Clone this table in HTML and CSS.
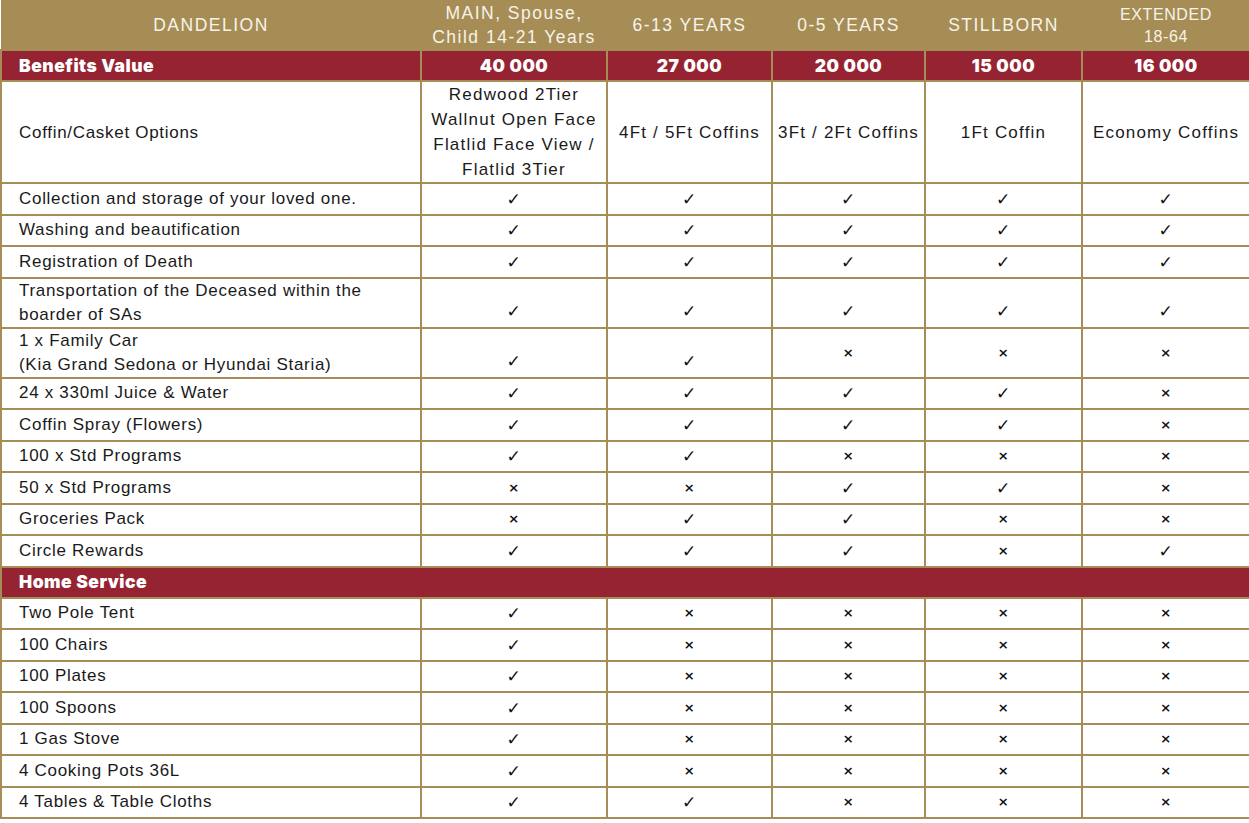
FILE: index.html
```html
<!DOCTYPE html>
<html>
<head>
<meta charset="utf-8">
<link rel="stylesheet" href="styles.css">
</head>
<body>
<table class="plan">
  <colgroup>
    <col class="c0"><col class="c1"><col class="c2"><col class="c3"><col class="c4"><col class="c5">
  </colgroup>
  <thead>
    <tr class="head">
      <th>DANDELION</th>
      <th>MAIN, Spouse,<br>Child 14-21 Years</th>
      <th>6-13 YEARS</th>
      <th>0-5 YEARS</th>
      <th>STILLBORN</th>
      <th class="ext">EXTENDED<br>18-64</th>
    </tr>
  </thead>
  <tbody>
    <tr class="band">
      <td class="lbl">Benefits Value</td>
      <td>40 000</td><td>27 000</td><td>20 000</td><td>15 000</td><td>16 000</td>
    </tr>
    <tr class="coffin">
      <td class="lbl">Coffin/Casket Options</td>
      <td class="val">Redwood 2Tier<br>Wallnut Open Face<br>Flatlid Face View /<br>Flatlid 3Tier</td>
      <td class="val">4Ft / 5Ft Coffins</td>
      <td class="val">3Ft / 2Ft Coffins</td>
      <td class="val">1Ft Coffin</td>
      <td class="val">Economy Coffins</td>
    </tr>
    <tr><td class="lbl">Collection and storage of your loved one.</td><td class="y">✓</td><td class="y">✓</td><td class="y">✓</td><td class="y">✓</td><td class="y">✓</td></tr>
    <tr><td class="lbl">Washing and beautification</td><td class="y">✓</td><td class="y">✓</td><td class="y">✓</td><td class="y">✓</td><td class="y">✓</td></tr>
    <tr><td class="lbl">Registration of Death</td><td class="y">✓</td><td class="y">✓</td><td class="y">✓</td><td class="y">✓</td><td class="y">✓</td></tr>
    <tr class="two"><td class="lbl">Transportation of the Deceased within the<br>boarder of SAs</td><td class="y low">✓</td><td class="y low">✓</td><td class="y low">✓</td><td class="y low">✓</td><td class="y low">✓</td></tr>
    <tr class="two"><td class="lbl">1 x Family Car<br>(Kia Grand Sedona or Hyundai Staria)</td><td class="y low">✓</td><td class="y low">✓</td><td class="n">×</td><td class="n">×</td><td class="n">×</td></tr>
    <tr><td class="lbl">24 x 330ml Juice &amp; Water</td><td class="y">✓</td><td class="y">✓</td><td class="y">✓</td><td class="y">✓</td><td class="n">×</td></tr>
    <tr><td class="lbl">Coffin Spray (Flowers)</td><td class="y">✓</td><td class="y">✓</td><td class="y">✓</td><td class="y">✓</td><td class="n">×</td></tr>
    <tr><td class="lbl">100 x Std Programs</td><td class="y">✓</td><td class="y">✓</td><td class="n">×</td><td class="n">×</td><td class="n">×</td></tr>
    <tr><td class="lbl">50 x Std Programs</td><td class="n">×</td><td class="n">×</td><td class="y">✓</td><td class="y">✓</td><td class="n">×</td></tr>
    <tr><td class="lbl">Groceries Pack</td><td class="n">×</td><td class="y">✓</td><td class="y">✓</td><td class="n">×</td><td class="n">×</td></tr>
    <tr><td class="lbl">Circle Rewards</td><td class="y">✓</td><td class="y">✓</td><td class="y">✓</td><td class="n">×</td><td class="y">✓</td></tr>
    <tr class="band section"><td class="lbl" colspan="6">Home Service</td></tr>
    <tr><td class="lbl">Two Pole Tent</td><td class="y">✓</td><td class="n">×</td><td class="n">×</td><td class="n">×</td><td class="n">×</td></tr>
    <tr><td class="lbl">100 Chairs</td><td class="y">✓</td><td class="n">×</td><td class="n">×</td><td class="n">×</td><td class="n">×</td></tr>
    <tr><td class="lbl">100 Plates</td><td class="y">✓</td><td class="n">×</td><td class="n">×</td><td class="n">×</td><td class="n">×</td></tr>
    <tr><td class="lbl">100 Spoons</td><td class="y">✓</td><td class="n">×</td><td class="n">×</td><td class="n">×</td><td class="n">×</td></tr>
    <tr><td class="lbl">1 Gas Stove</td><td class="y">✓</td><td class="n">×</td><td class="n">×</td><td class="n">×</td><td class="n">×</td></tr>
    <tr><td class="lbl">4 Cooking Pots 36L</td><td class="y">✓</td><td class="n">×</td><td class="n">×</td><td class="n">×</td><td class="n">×</td></tr>
    <tr><td class="lbl">4 Tables &amp; Table Cloths</td><td class="y">✓</td><td class="y">✓</td><td class="n">×</td><td class="n">×</td><td class="n">×</td></tr>
  </tbody>
</table>
</body>
</html>
```
FILE: styles.css
```css
html, body {
  margin: 0;
  padding: 0;
  background: #ffffff;
}

.plan {
  width: 1249px;
  table-layout: fixed;
  border-collapse: collapse;
  font-family: "Liberation Sans", Arial, sans-serif;
  font-size: 17px;
  color: #1a1a1a;
}

.c0 { width: 420px; }
.c1 { width: 186px; }
.c2 { width: 165px; }
.c3 { width: 153px; }
.c4 { width: 157px; }
.c5 { width: 168px; }

.plan td {
  border: 2px solid #a68d57;
  padding: 0;
  height: 29.5px;
  text-align: center;
  vertical-align: middle;
  letter-spacing: 0.7px;
  line-height: 20px;
}

.head th {
  background: #a68d55;
  color: #f7f3ea;
  font-weight: normal;
  font-size: 17.5px;
  letter-spacing: 1.5px;
  line-height: 24px;
  height: 49px;
  padding: 0;
  text-align: center;
  vertical-align: middle;
  border: none;
}

.head th.ext {
  font-size: 16px;
  letter-spacing: 0.6px;
  line-height: 22px;
  padding-top: 2px;
  height: 47px;
}

.band td {
  background: #962332;
  color: #ffffff;
  font-family: "Inter", "Liberation Sans", sans-serif;
  font-weight: 900;
  font-size: 17.5px;
  letter-spacing: 0.5px;
  height: 29px;
}

.plan td.lbl {
  text-align: left;
  padding-left: 17px;
}

.coffin td {
  height: 99px;
  line-height: 25px;
}

.coffin td.val {
  letter-spacing: 1.2px;
}

.two td {
  height: 48px;
  line-height: 24px;
}

.plan td.y {
  font-family: "DejaVu Sans", sans-serif;
  font-size: 17px;
  color: #111;
}

.plan td.low {
  vertical-align: bottom;
  line-height: 20px;
  height: 42px;
  padding-bottom: 6px;
}

.plan td.n {
  font-family: "DejaVu Sans", sans-serif;
  font-weight: bold;
  font-size: 13px;
  color: #111;
}
```
